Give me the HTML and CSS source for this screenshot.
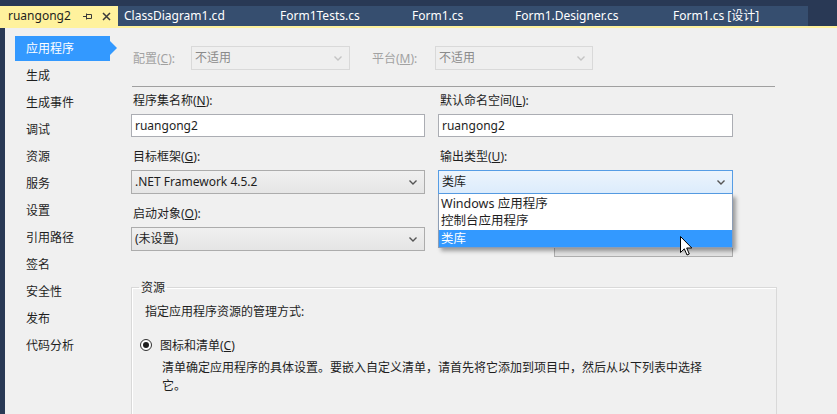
FILE: index.html
```html
<!DOCTYPE html>
<html lang="zh-CN">
<head>
<meta charset="utf-8">
<title>ruangong2</title>
<link rel="stylesheet" href="styles.css">
</head>
<body>
<div class="tabwell">
  <div class="tabs">
    <div class="tab active">
      <span>ruangong2</span>
      <svg class="pin" width="10" height="9" viewBox="0 0 10 9"><path d="M0 4.5h3.5M3.5 1.5v6M3.5 2.5h5v4h-5" fill="none" stroke="#3a3a3a" stroke-width="1"/></svg>
      <svg class="close" width="9" height="9" viewBox="0 0 9 9"><path d="M1 1L8 8M8 1L1 8" stroke="#3a3a3a" stroke-width="1.5"/></svg>
    </div>
    <div class="tab w2">ClassDiagram1.cd</div>
    <div class="tab w3">Form1Tests.cs</div>
    <div class="tab w4">Form1.cs</div>
    <div class="tab w5">Form1.Designer.cs</div>
    <div class="tab w6">Form1.cs [设计]</div>
  </div>
</div>
<div class="main">
  <div class="page">
    <nav class="sidebar">
      <div class="nav-item selected">应用程序</div>
      <div class="nav-item">生成</div>
      <div class="nav-item">生成事件</div>
      <div class="nav-item">调试</div>
      <div class="nav-item">资源</div>
      <div class="nav-item">服务</div>
      <div class="nav-item">设置</div>
      <div class="nav-item">引用路径</div>
      <div class="nav-item">签名</div>
      <div class="nav-item">安全性</div>
      <div class="nav-item">发布</div>
      <div class="nav-item">代码分析</div>
    </nav>
    <div class="content">
      <div class="config-row">
        <span class="cfg-label">配置(<u>C</u>):</span>
        <div class="combo disabled w-cfg"><span>不适用</span><svg class="chev" width="8" height="5" viewBox="0 0 8 5"><path d="M0.5 0.5L4 4L7.5 0.5" fill="none" stroke="#c4c4c4" stroke-width="1.4"/></svg></div>
        <span class="cfg-label second">平台(<u>M</u>):</span>
        <div class="combo disabled w-plat"><span>不适用</span><svg class="chev" width="8" height="5" viewBox="0 0 8 5"><path d="M0.5 0.5L4 4L7.5 0.5" fill="none" stroke="#c4c4c4" stroke-width="1.4"/></svg></div>
      </div>
      <div class="sep"></div>
      <div class="cols">
        <div class="col col1">
          <div class="field-label first">程序集名称(<u>N</u>):</div>
          <div class="textbox">ruangong2</div>
          <div class="field-label">目标框架(<u>G</u>):</div>
          <div class="combo"><span>.NET Framework 4.5.2</span><svg class="chev" width="8" height="5" viewBox="0 0 8 5"><path d="M0.5 0.5L4 4L7.5 0.5" fill="none" stroke="#555" stroke-width="1.4"/></svg></div>
          <div class="field-label">启动对象(<u>O</u>):</div>
          <div class="combo"><span>(未设置)</span><svg class="chev" width="8" height="5" viewBox="0 0 8 5"><path d="M0.5 0.5L4 4L7.5 0.5" fill="none" stroke="#555" stroke-width="1.4"/></svg></div>
        </div>
        <div class="col col2">
          <div class="field-label first">默认命名空间(<u>L</u>):</div>
          <div class="textbox">ruangong2</div>
          <div class="field-label">输出类型(<u>U</u>):</div>
          <div class="combo-wrap">
            <div class="combo focused"><span>类库</span><svg class="chev" width="8" height="5" viewBox="0 0 8 5"><path d="M0.5 0.5L4 4L7.5 0.5" fill="none" stroke="#555" stroke-width="1.4"/></svg></div>
            <ul class="droplist">
              <li>Windows 应用程序</li>
              <li>控制台应用程序</li>
              <li class="sel">类库</li>
            </ul>
          </div>
          <div class="btn"></div>
        </div>
      </div>
      <fieldset class="group">
        <legend>资源</legend>
        <div class="group-desc">指定应用程序资源的管理方式:</div>
        <div class="radio-row">
          <span class="radio"><span class="dot"></span></span>
          <span>图标和清单(<u>C</u>)</span>
        </div>
        <p class="radio-help">清单确定应用程序的具体设置。要嵌入自定义清单，请首先将它添加到项目中，然后从以下列表中选择它。</p>
      </fieldset>
    </div>
  </div>
</div>
<svg class="cursor" width="13" height="20" viewBox="0 0 13 20"><path d="M0.5 0.5V16.5L4.3 12.8L7 19L9.3 18L6.7 12H11.8Z" fill="#fff" stroke="#000" stroke-width="1" stroke-linejoin="round"/></svg>
</body>
</html>
```
FILE: styles.css
```css
body {
  margin: 0;
  width: 837px;
  height: 414px;
  overflow: hidden;
  position: relative;
  background: #293955;
  font-family: "Noto Sans", "Noto Sans CJK SC", sans-serif;
  font-size: 12px;
  color: #1e1e1e;
}

.tabwell {
  height: 28px;
  padding-top: 6px;
  box-sizing: border-box;
  border-bottom: 2px solid #fff29d;
}

.tabs {
  display: flex;
  width: 808px;
  height: 20px;
  background: #364e6f;
}

.tab {
  height: 20px;
  line-height: 20px;
  padding-left: 6px;
  box-sizing: border-box;
  color: #ffffff;
  white-space: nowrap;
  flex: none;
}

.tab.active {
  width: 118px;
  padding-left: 8px;
  background: #fff29d;
  color: #1e1e1e;
  display: flex;
  align-items: center;
}

.tab.active .pin { margin-left: 12px; }
.tab.active .close { margin-left: 9px; }

.w2 { width: 156px; }
.w3 { width: 132px; }
.w4 { width: 103px; }
.w5 { width: 158px; }
.w6 { width: 141px; }

.main {
  display: flex;
  height: 386px;
  padding-left: 5px;
  box-sizing: border-box;
}

.page {
  flex: 1;
  display: flex;
  background: #f0f0f0;
  overflow: hidden;
}

.sidebar {
  width: 118px;
  flex: none;
  padding-top: 8px;
  box-sizing: border-box;
}

.nav-item {
  position: relative;
  margin-left: 10px;
  width: 95px;
  height: 25px;
  line-height: 25px;
  margin-bottom: 2px;
  padding-left: 11px;
  box-sizing: border-box;
  color: #1e1e1e;
}

.nav-item.selected {
  background: #3399ff;
  color: #ffffff;
}

.nav-item.selected::after {
  content: "";
  position: absolute;
  right: -7px;
  top: 5px;
  border-left: 7px solid #3399ff;
  border-top: 7px solid transparent;
  border-bottom: 7px solid transparent;
}

.content {
  flex: 1;
  padding-top: 18px;
  padding-left: 8px;
}

.config-row {
  display: flex;
  align-items: center;
  height: 24px;
}

.cfg-label {
  width: 58px;
  margin-left: 2px;
  color: #a2a2a2;
  flex: none;
}

.cfg-label.second {
  width: 63px;
  margin-left: 22px;
}

.combo {
  height: 24px;
  box-sizing: border-box;
  border: 1px solid #acacac;
  background: linear-gradient(#f0f0f0, #e5e5e5);
  display: flex;
  align-items: center;
  justify-content: space-between;
  padding: 0 7px 0 3px;
  line-height: 22px;
}

.combo.disabled {
  border-color: #d9d9d9;
  background: #efefef;
  color: #8a8a8a;
}

.w-cfg { width: 159px; }
.w-plat { width: 158px; }

.combo.focused {
  border-color: #569de5;
  background: linear-gradient(#ecf4fc, #dcecfc);
}

.sep {
  margin-top: 16px;
  margin-left: 1px;
  width: 643px;
  height: 1px;
  background: #a0a0a0;
}

.cols {
  display: flex;
  gap: 13px;
}

.col {
  display: flex;
  flex-direction: column;
}

.col1 { width: 294px; }
.col2 { width: 295px; }

.field-label {
  height: 16px;
  line-height: 16px;
  margin-top: 12px;
  margin-bottom: 5px;
  padding-left: 2px;
}

.field-label.first { margin-top: 6px; }

.textbox {
  height: 23px;
  box-sizing: border-box;
  border: 1px solid #abadb3;
  background: #ffffff;
  padding-left: 3px;
  line-height: 21px;
}

.combo-wrap {
  position: relative;
}

.droplist {
  position: absolute;
  top: 100%;
  left: 0;
  width: 295px;
  height: 54px;
  margin: 0;
  padding: 1px 0 0 0;
  list-style: none;
  box-sizing: border-box;
  border: 1px solid #8c9db5;
  border-top: none;
  background: #ffffff;
  box-shadow: 3px 3px 4px rgba(0, 0, 0, 0.35);
  z-index: 2;
}

.droplist li {
  height: 17px;
  line-height: 18px;
  padding-left: 2px;
  font-size: 12.5px;
}

.droplist li.sel {
  margin-top: 1px;
  background: #3399ff;
  color: #ffffff;
}

.btn {
  align-self: flex-end;
  margin-top: 36px;
  width: 179px;
  height: 27px;
  box-sizing: border-box;
  border: 1px solid #adadad;
  background: #e1e1e1;
}

.group {
  margin: 22px 0 0 0;
  width: 646px;
  height: 200px;
  box-sizing: border-box;
  padding: 0;
  border: 1px solid #d9d9d9;
  box-shadow: inset 1px 1px 0 #ffffff;
}

.group legend {
  margin-left: 7px;
  padding: 0 2px;
  height: 16px;
  line-height: 18px;
}

.group-desc {
  margin-top: 9px;
  padding-left: 13px;
  height: 16px;
  line-height: 16px;
}

.radio-row {
  margin-top: 17px;
  padding-left: 8px;
  height: 16px;
  display: flex;
  align-items: center;
  gap: 8px;
}

.radio {
  width: 12px;
  height: 12px;
  box-sizing: border-box;
  border: 1px solid #333333;
  border-radius: 50%;
  background: #ffffff;
  display: flex;
  align-items: center;
  justify-content: center;
}

.radio .dot {
  width: 6px;
  height: 6px;
  border-radius: 50%;
  background: #1e1e1e;
}

.radio-help {
  margin: 6px 0 0 0;
  padding-left: 30px;
  width: 545px;
  line-height: 18px;
}

.cursor {
  position: absolute;
  left: 680px;
  top: 236px;
  z-index: 5;
}
```
